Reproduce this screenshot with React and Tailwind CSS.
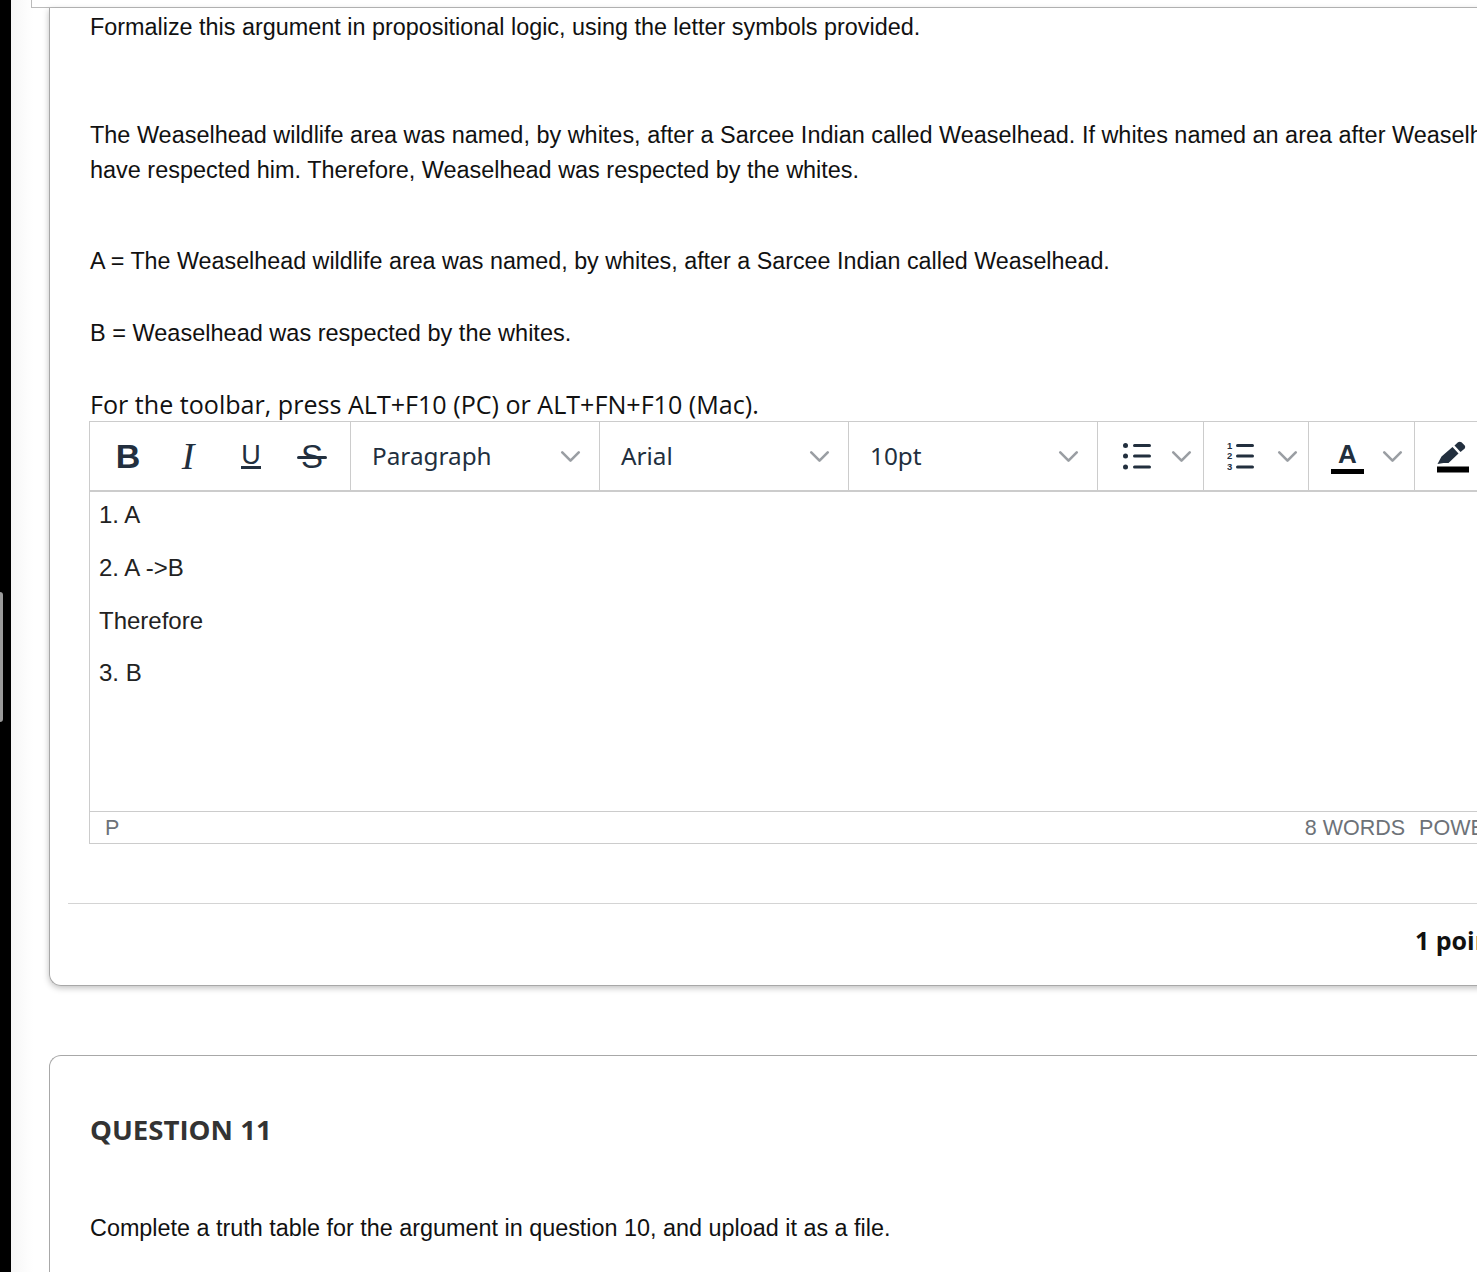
import { ChevronDown } from 'lucide-react';

const prose = 'font-["Liberation_Sans",Arial,sans-serif] text-[#111] whitespace-nowrap leading-[35px]';

function Caret() {
  return <ChevronDown size={33} strokeWidth={1.9} className="text-[#9a9ea3] shrink-0" />;
}

function SelectBox({ label, width }) {
  return (
    <div className={`flex items-center justify-between pl-[21px] pr-[12.5px] border-r border-[#ccc] h-full ${width}`}>
      <span className='font-["Noto_Sans",sans-serif] text-[24.3px] text-[#222f3e]'>{label}</span>
      <Caret />
    </div>
  );
}

function BulletIcon() {
  return (
    <svg width="30" height="30" viewBox="0 0 30 30" fill="#222f3e" className="shrink-0">
      <circle cx="3.5" cy="4.5" r="2.5" />
      <circle cx="3.5" cy="15" r="2.5" />
      <circle cx="3.5" cy="26" r="2.5" />
      <rect x="11" y="3" width="18" height="3" rx="1.5" />
      <rect x="11" y="13.5" width="18" height="3" rx="1.5" />
      <rect x="11" y="24.5" width="18" height="3" rx="1.5" />
    </svg>
  );
}

function NumberIcon() {
  return (
    <svg width="30" height="30" viewBox="0 0 30 30" fill="#222f3e" className="shrink-0">
      <text x="0" y="7.5" fontSize="9.5" fontWeight="700" fontFamily="Liberation Sans">1</text>
      <text x="0" y="18" fontSize="9.5" fontWeight="700" fontFamily="Liberation Sans">2</text>
      <text x="0" y="28.5" fontSize="9.5" fontWeight="700" fontFamily="Liberation Sans">3</text>
      <rect x="9" y="3" width="18" height="3" rx="1.5" />
      <rect x="9" y="13.5" width="18" height="3" rx="1.5" />
      <rect x="9" y="24.5" width="18" height="3" rx="1.5" />
    </svg>
  );
}

function PenIcon() {
  return (
    <svg width="34" height="34" viewBox="0 0 34 34" className="shrink-0">
      <path d="M1.500 25l4-7.500L16.500 8l6 6.500L12.500 24H7.500z" fill="#222f3e" />
      <path d="M18.500 6.500l3.500-3.200c1-.9 2.500-.9 3.500 0l3 3c.9 1 .9 2.400 0 3.400L24.500 13z" fill="#222f3e" />
      <rect x="1" y="27.500" width="32" height="6" fill="#000" />
    </svg>
  );
}

function Toolbar() {
  return (
    <div className="flex h-[70px] items-center border-b-2 border-[#ccc]">
      <div className="flex h-full w-[261px] shrink-0 items-center border-r border-[#ccc] pl-[23px] text-[#222f3e]">
        <span className='w-[30px] text-center font-["Liberation_Sans",sans-serif] text-[34px] font-bold leading-none'>B</span>
        <span className='ml-[37px] w-[16px] text-center font-["Liberation_Serif",serif] text-[38px] italic leading-none'>I</span>
        <span className='ml-[45px] w-[20px] border-b-[3px] border-[#222f3e] text-center font-["Liberation_Sans",sans-serif] text-[27px] leading-[22px]'>U</span>
        <span className='relative ml-[36px] w-[30px] text-center font-["Liberation_Sans",sans-serif] text-[33px] leading-none'>
          S
          <span className="absolute left-0 top-[16px] h-[3px] w-[30px] rounded-full bg-[#222f3e]" />
        </span>
      </div>
      <SelectBox label="Paragraph" width="w-[249px] shrink-0" />
      <SelectBox label="Arial" width="w-[249px] shrink-0" />
      <SelectBox label="10pt" width="w-[249px] shrink-0" />
      <div className="flex h-full w-[106px] shrink-0 items-center gap-[12.5px] border-r border-[#ccc] pl-[24px]">
        <BulletIcon />
        <Caret />
      </div>
      <div className="flex h-full w-[105px] shrink-0 items-center gap-[13.5px] border-r border-[#ccc] pl-[23px]">
        <NumberIcon />
        <Caret />
      </div>
      <div className="flex h-full w-[106px] shrink-0 items-center gap-[11.5px] border-r border-[#ccc] pl-[22px]">
        <span className='w-[33px] border-b-[5px] border-black text-center font-["Liberation_Sans",sans-serif] text-[26px] font-bold leading-[30px] text-[#222f3e]'>A</span>
        <Caret />
      </div>
      <div className="flex h-full shrink-0 items-center pl-[21px]">
        <PenIcon />
      </div>
    </div>
  );
}

function Editor() {
  return (
    <div className="ml-[-1px] w-[1542px] border-y border-l border-[#ccc]">
      <Toolbar />
      <div className='flex h-[319px] flex-col gap-[16.8px] whitespace-nowrap px-[9px] pt-[5px] font-["Liberation_Sans",sans-serif] text-[24px] leading-[36px] text-[#222]'>
        <p>1. A</p>
        <p>2. A -&gt;B</p>
        <p>Therefore</p>
        <p>3. B</p>
      </div>
      <div className='flex h-[32px] items-center justify-between border-t border-[#ccc] pl-[15px] pt-[1px] font-["Liberation_Sans",sans-serif] text-[21.5px] text-[#6d7278]'>
        <span>P</span>
        <div className="flex gap-[14px] pr-[12px] whitespace-nowrap">
          <span>8 WORDS</span>
          <span>POWERED BY TINY</span>
        </div>
      </div>
    </div>
  );
}

export default function App() {
  return (
    <div className="flex h-[1272px] w-[1477px] overflow-hidden bg-white">
      <div className="relative w-[11px] shrink-0 bg-black">
        <div className="absolute left-0 top-[592px] h-[130px] w-[3px] rounded-r-[3px] bg-[#9b9b9b]" />
      </div>

      <main className="w-[1466px] overflow-hidden bg-gradient-to-r from-[#f6f6f6] via-white via-[1.5%] to-white pl-[38px]">
        <div className="ml-[-18px] h-[8px] w-[1500px] border-b border-l border-[#bbb]" />

        <section className="h-[978px] w-[1600px] rounded-bl-[12px] border-b border-l border-[#a8a8a8] pl-[40px] pt-[2px] shadow-[0_2px_6px_rgba(0,0,0,0.25)]">
          <p className={`${prose} text-[23.38px]`}>
            Formalize this argument in propositional logic, using the letter symbols provided.
          </p>
          <p className={`${prose} mt-[73px] text-[23.44px]`}>
            The Weaselhead wildlife area was named, by whites, after a Sarcee Indian called Weaselhead. If whites named an area after Weaselhead, they must
            <br />
            have respected him. Therefore, Weaselhead was respected by the whites.
          </p>
          <p className={`${prose} mt-[56px] text-[23.31px]`}>
            A = The Weaselhead wildlife area was named, by whites, after a Sarcee Indian called Weaselhead.
          </p>
          <p className={`${prose} mt-[37px] text-[23.52px]`}>B = Weaselhead was respected by the whites.</p>
          <p className='mt-[36px] whitespace-nowrap font-["Open_Sans",sans-serif] text-[25.1px] leading-[34px] text-[#111]'>
            For the toolbar, press ALT+F10 (PC) or ALT+FN+F10 (Mac).
          </p>
          <Editor />
          <div className="ml-[-22px] mt-[59px] border-t border-[#d4d4d4] pt-[19px] pl-[1347px]">
            <span className='whitespace-nowrap font-["Open_Sans",sans-serif] text-[25px] font-bold leading-[35px] text-[#111]'>1 point</span>
          </div>
        </section>

        <section className="mt-[69px] h-[300px] w-[1600px] rounded-tl-[12px] border-l border-t border-[#a8a8a8] pl-[40px] pt-[53px]">
          <h2 className='whitespace-nowrap font-["Open_Sans",sans-serif] text-[27.6px] font-bold leading-[40px] text-[#333]'>QUESTION 11</h2>
          <p className={`${prose} mt-[62px] text-[23.38px]`}>
            Complete a truth table for the argument in question 10, and upload it as a file.
          </p>
        </section>
      </main>
    </div>
  );
}
